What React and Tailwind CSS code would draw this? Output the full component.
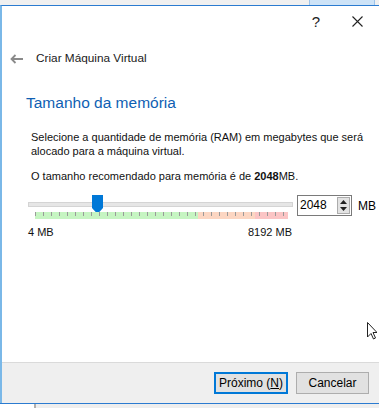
import React from 'react'

const font = { fontFamily: '"Liberation Sans", Arial, sans-serif' }

function Ticks() {
  const xs = []
  for (let x = 0.5; x <= 252; x += 8) xs.push(x)
  return (
    <svg width="253" height="8" className="absolute left-0 top-0">
      {xs.map((x) => (
        <line key={x} x1={x} y1="0" x2={x} y2="4" stroke="#9a9a9a" strokeWidth="1" />
      ))}
    </svg>
  )
}

function Thumb() {
  return (
    <svg width="11" height="19" viewBox="0 0 11 19" className="absolute left-[63px] top-[-8px]">
      <path d="M0 0 H11 V13 L5.5 19 L0 13 Z" fill="#0078d7" />
    </svg>
  )
}

export default function App() {
  return (
    <div className="w-[379px] h-[408px] bg-[#f0f0f0] flex flex-col overflow-hidden text-[#000]" style={font}>
      <div className="h-[5px] flex justify-end pr-[4px]">
        <div className="w-[66px] h-[5px] bg-[#cde3f7] border-x border-[#9cc3ea]" />
      </div>
      <div className="flex-1 flex flex-col border-t border-[#2b7bd0] border-l-2 border-l-[#7ab8e8] bg-white">
        <div className="h-[30px] flex items-center justify-end gap-[32px] pr-[16px] text-[15px] text-[#222]">
          <span className="leading-none">?</span>
          <svg width="11" height="11" viewBox="0 0 11 11">
            <path d="M0.5 0.5 L10.5 10.5 M10.5 0.5 L0.5 10.5" stroke="#222" strokeWidth="1.1" />
          </svg>
        </div>

        <div className="h-[48px] flex items-center pl-[8px] pb-[2px]">
          <svg width="14" height="10" viewBox="0 0 14 10" className="mr-[12px]">
            <path d="M13 5 H1.5 M5.5 1 L1.5 5 L5.5 9" stroke="#8a8a8a" strokeWidth="1.8" fill="none" />
          </svg>
          <span className="text-[11.8px] text-[#1a1a1a]">Criar Máquina Virtual</span>
        </div>

        <div className="pl-[24px] pt-[9px] text-[15.5px] text-[#0f5fb3] leading-[20px]">Tamanho da memória</div>

        <div className="pl-[29px] pr-[16px] pt-[17px] text-[11px] leading-[14px] text-[#111]">
          <p>Selecione a quantidade de memória (RAM) em megabytes que será alocado para a máquina virtual.</p>
          <p className="mt-[11px]">
            O tamanho recomendado para memória é de <b>2048</b>MB.
          </p>
        </div>

        <div className="flex items-start pl-[26px] pt-[11px]">
          <div className="w-[265px] flex flex-col">
            <div className="relative h-[5px] mt-[8px] bg-[#e6e6e6] border border-[#d4d4d4]">
              <Thumb />
            </div>
            <div className="relative h-[7px] mt-[5px] ml-[7px] w-[253px] flex">
              <div className="w-[163px] bg-[#c6f5c2]" />
              <div className="w-[57px] bg-[#fcd6c2]" />
              <div className="flex-1 bg-[#fbc5c5]" />
              <Ticks />
            </div>
            <div className="flex justify-between mt-[5px] text-[11px] text-[#111] pr-[1px]">
              <span>4 MB</span>
              <span>8192 MB</span>
            </div>
          </div>
          <div className="ml-[4px] mt-[1px] w-[55px] h-[21px] border border-[#7a7a7a] flex items-stretch">
            <span className="flex-1 pl-[2px] text-[12px] leading-[19px]">2048</span>
            <div className="w-[13px] my-[1px] mr-[1px] bg-[#e3e3e3] border border-[#acacac] flex flex-col items-center justify-around">
              <svg width="7" height="4" viewBox="0 0 7 4"><path d="M0 4 L3.5 0 L7 4 Z" fill="#222" /></svg>
              <svg width="7" height="4" viewBox="0 0 7 4"><path d="M0 0 L3.5 4 L7 0 Z" fill="#222" /></svg>
            </div>
          </div>
          <span className="ml-[6px] mt-[3px] text-[12px]">MB</span>
        </div>

        <div className="flex-1 flex justify-end items-center pr-[2px]">
          <svg width="10" height="18" viewBox="0 0 10 18" className="mt-[60px]">
            <path d="M0.5 0.5 V15 L4 11.5 L6.5 17 L8.5 16 L6 10.5 L10 10.5 Z" fill="#fff" stroke="#222" strokeWidth="1" />
          </svg>
        </div>

        <div className="h-[41px] bg-[#efefef] border-t border-[#dadada] flex items-center justify-end gap-[8px] pr-[10px]">
          <button className="w-[74px] h-[22px] border-2 border-[#0078d7] bg-[#e1e1e1] text-[12px] leading-none">
            Próximo (<span className="underline">N</span>)
          </button>
          <button className="w-[73px] h-[22px] border border-[#adadad] bg-[#e1e1e1] text-[12px] leading-none">
            Cancelar
          </button>
        </div>
      </div>
      <div className="h-[1px] bg-[#2b7bd0]" />
      <div className="h-[4px] flex">
        <div className="w-[34px] bg-white" />
        <div className="w-[2px] bg-[#b0b0b0]" />
        <div className="flex-1 bg-[#eeeeee]" />
      </div>
    </div>
  )
}
